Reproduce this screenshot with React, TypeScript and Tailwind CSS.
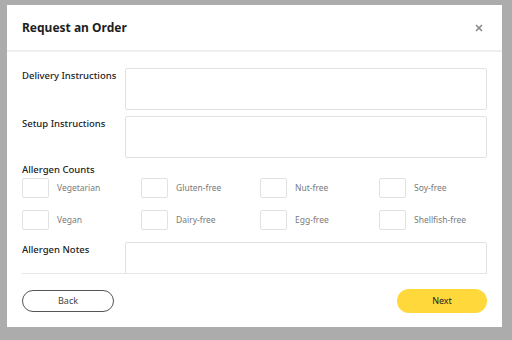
import { X } from 'lucide-react';

const allergens = [
  'Vegetarian',
  'Gluten-free',
  'Nut-free',
  'Soy-free',
  'Vegan',
  'Dairy-free',
  'Egg-free',
  'Shellfish-free',
];

function TextRow({ label }: { label: string }) {
  return (
    <div className="flex">
      <label className="w-[103px] shrink-0 pt-[1px] text-[9.5px] font-medium text-[#222]">
        {label}
      </label>
      <textarea className="h-[42px] flex-1 resize-none rounded-[2px] border border-[#e2e2e2] bg-white" />
    </div>
  );
}

export default function App() {
  return (
    <div
      className="h-[340px] w-[512px] overflow-hidden bg-[#acacac] pl-[7px] pt-[5px]"
      style={{ fontFamily: '"Noto Sans", Arial, sans-serif' }}
    >
      <div className="flex h-[322px] w-[495px] flex-col bg-white">
        <div className="flex h-[47px] items-center justify-between border-b-2 border-[#efefef] pl-[15px] pr-[18px]">
          <h1 className="text-[12px] font-bold text-[#1e1e1e]">Request an Order</h1>
          <X size={10} strokeWidth={4} className="text-[#8a8a8a]" />
        </div>

        <div className="mx-[15px] flex h-[222px] flex-col overflow-hidden border-b border-[#e6e6e6] pt-[16px]">
          <div className="flex flex-col gap-[6px]">
            <TextRow label="Delivery Instructions" />
            <TextRow label="Setup Instructions" />
          </div>

          <div className="mt-[5px] text-[9.5px] font-medium text-[#222]">Allergen Counts</div>
          <div className="mt-[1px] grid grid-cols-[119px_119px_119px_1fr] gap-y-[12px]">
            {allergens.map((a) => (
              <div key={a} className="flex items-center">
                <input className="h-[20px] w-[27px] rounded-[2px] border border-[#e2e2e2]" />
                <span className="ml-[8px] text-[8.5px] text-[#7a7a7a]">{a}</span>
              </div>
            ))}
          </div>

          <div className="mt-[12px] flex">
            <label className="w-[103px] shrink-0 pt-[1px] text-[9.5px] font-medium text-[#222]">
              Allergen Notes
            </label>
            <textarea className="h-[42px] flex-1 resize-none rounded-[2px] border border-[#e2e2e2]" />
          </div>
        </div>

        <div className="flex items-center justify-between px-[15px] pt-[15px]">
          <button className="h-[22px] w-[92px] rounded-full border border-[#555] text-[9px] text-[#444]">
            Back
          </button>
          <button className="h-[24px] w-[90px] rounded-full bg-[#ffd83b] text-[9px] text-[#222]">
            Next
          </button>
        </div>
      </div>
    </div>
  );
}
